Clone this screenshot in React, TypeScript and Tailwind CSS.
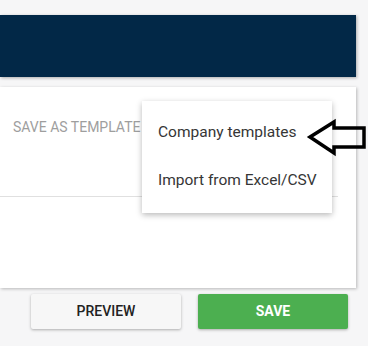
import React from "react";

export default function App() {
  return (
    <div className="relative w-[368px] h-[346px] bg-[#f6f6f7] overflow-hidden" style={{ fontFamily: "Roboto, 'Liberation Sans', sans-serif" }}>
      <div className="pt-[15px]">
        <div className="w-[356px] h-[62px] bg-[#022847] shadow-[1px_1px_3px_rgba(0,0,0,0.3)]" />
      </div>
      <div className="relative mt-[10px] w-[356px] h-[201px] bg-white shadow-[1px_1px_3px_rgba(0,0,0,0.25)]">
        <div className="pt-[31px] pl-[13px] text-[14px] leading-[18px] text-[#9e9e9e]">SAVE AS TEMPLATE</div>
        <div className="mt-[60px] w-[338px] h-px bg-[#e0e0e0]" />
        <div className="absolute left-[142px] top-[14px] w-[190px] h-[112px] bg-white shadow-[0_2px_6px_rgba(0,0,0,0.28)] flex flex-col py-[8px]">
          <div className="h-[48px] flex items-center pl-[16px] text-[15.5px] text-[#363636]">Company templates</div>
          <div className="h-[48px] flex items-center pl-[16px] text-[15.5px] text-[#363636]">Import from Excel/CSV</div>
        </div>
      </div>
      <div className="flex gap-[17px] pl-[31px] mt-[6px]">
        <button className="w-[150px] h-[35px] bg-[#f7f7f7] rounded-[2px] shadow-[0_1px_3px_rgba(0,0,0,0.3)] text-[14px] font-medium text-[#222]">PREVIEW</button>
        <button className="w-[150px] h-[35px] bg-[#4caf50] rounded-[2px] shadow-[0_1px_3px_rgba(0,0,0,0.3)] text-[14px] font-bold text-white">SAVE</button>
      </div>
      <svg className="absolute left-0 top-0" width="368" height="346" viewBox="0 0 368 346">
        <polygon points="310,137 334,122 334,128 364,128 364,147 334,147 334,153" fill="none" stroke="#000" strokeWidth="3.5" strokeLinejoin="miter" />
      </svg>
    </div>
  );
}
